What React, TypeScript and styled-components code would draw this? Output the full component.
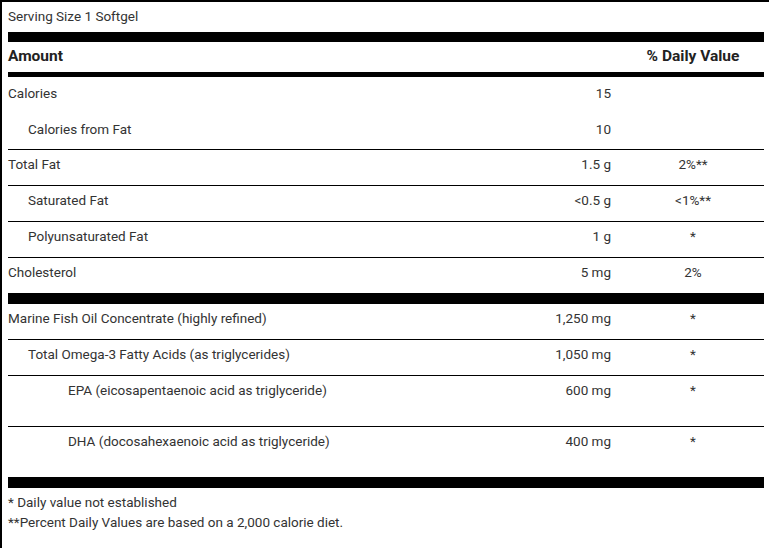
import React from "react";
import styled, { createGlobalStyle } from "styled-components";

type Nutrient = {
  name: string;
  amount: string;
  dv?: string;
  indent?: number;
  top?: number;
  height?: number;
  line?: boolean;
};

const basics: Nutrient[] = [
  { name: "Calories", amount: "15", top: 7, height: 36 },
  { name: "Calories from Fat", amount: "10", indent: 20, top: 7, height: 36, line: true },
  { name: "Total Fat", amount: "1.5 g", dv: "2%**", line: true },
  { name: "Saturated Fat", amount: "<0.5 g", dv: "<1%**", indent: 20, line: true },
  { name: "Polyunsaturated Fat", amount: "1 g", dv: "*", indent: 20, line: true },
  { name: "Cholesterol", amount: "5 mg", dv: "2%" },
];

const oils: Nutrient[] = [
  { name: "Marine Fish Oil Concentrate (highly refined)", amount: "1,250 mg", dv: "*", line: true },
  { name: "Total Omega-3 Fatty Acids (as triglycerides)", amount: "1,050 mg", dv: "*", indent: 20, line: true },
  { name: "EPA (eicosapentaenoic acid as triglyceride)", amount: "600 mg", dv: "*", indent: 60, height: 50, line: true },
  { name: "DHA (docosahexaenoic acid as triglyceride)", amount: "400 mg", dv: "*", indent: 60, height: 50 },
];

const renderRow = (n: Nutrient) => (
  <Row key={n.name} $top={n.top ?? 5} $height={n.height ?? 35} $line={!!n.line}>
    <Name $indent={n.indent ?? 0}>{n.name}</Name>
    <Amount>{n.amount}</Amount>
    <Daily>{n.dv}</Daily>
  </Row>
);

export default function App() {
  return (
    <>
      <GlobalStyle />
      <Panel>
        <Serving>Serving Size 1 Softgel</Serving>
        <Bar $size={10} />
        <HeadRow>
          <span>Amount</span>
          <span />
          <Daily>% Daily Value</Daily>
        </HeadRow>
        <Bar $size={5} />
        {basics.map(renderRow)}
        <Bar $size={11} />
        {oils.map(renderRow)}
        <Bar $size={11} />
        <Notes>
          <div>* Daily value not established</div>
          <div>**Percent Daily Values are based on a 2,000 calorie diet.</div>
        </Notes>
      </Panel>
    </>
  );
}

const GlobalStyle = createGlobalStyle`
  html, body {
    margin: 0;
    padding: 0;
    background: #fff;
  }
  body {
    font-family: Roboto, "Liberation Sans", sans-serif;
    font-size: 13.5px;
    color: #333;
  }
`;

const Panel = styled.div`
  border-left: 2px solid #000;
  border-top: 2px solid #000;
  padding: 0 5px 0 6px;
  min-height: 546px;
`;

const Serving = styled.div`
  padding: 4px 0 6px;
  line-height: 20px;
`;

const Bar = styled.div<{ $size: number }>`
  height: ${(p) => p.$size}px;
  background: #000;
`;

const Grid = styled.div`
  display: grid;
  grid-template-columns: 1fr 120px 142px;
  align-items: start;
`;

const HeadRow = styled(Grid)`
  padding: 4px 0 6px;
  line-height: 20px;
  font-size: 15.5px;
  font-weight: 700;
  color: #222;
`;

const Row = styled(Grid)<{ $top: number; $height: number; $line: boolean }>`
  box-sizing: border-box;
  height: ${(p) => p.$height + (p.$line ? 1 : 0)}px;
  padding-top: ${(p) => p.$top}px;
  line-height: 18px;
  border-bottom: ${(p) => (p.$line ? "1px solid #000" : "none")};
`;

const Name = styled.span<{ $indent: number }>`
  padding-left: ${(p) => p.$indent}px;
`;

const Amount = styled.span`
  text-align: right;
  padding-right: 11px;
`;

const Daily = styled.span`
  text-align: center;
`;

const Notes = styled.div`
  padding-top: 4px;
  line-height: 20px;
`;
